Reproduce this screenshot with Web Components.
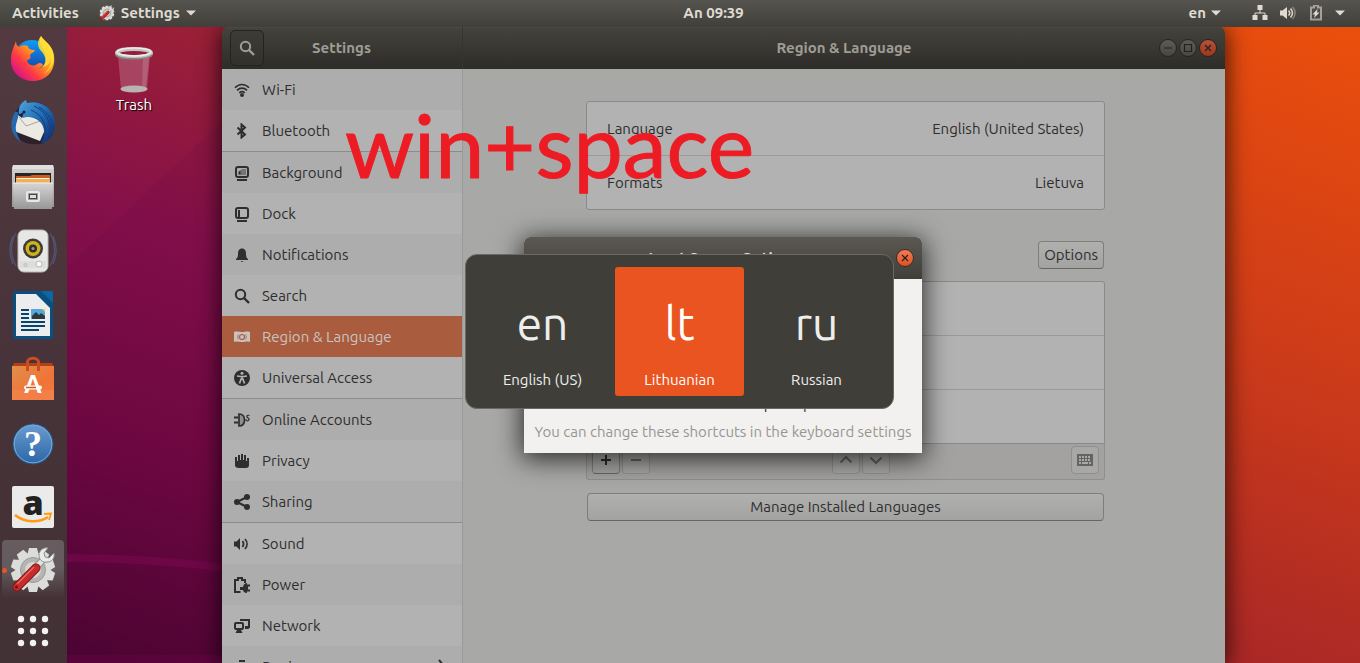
<!DOCTYPE html>
<html lang="en">
<head>
<meta charset="utf-8">
<title>Settings</title>
<style>
  html, body { margin: 0; height: 100%; overflow: hidden; }
  body {
    font: 15px/20px "Ubuntu", "Noto Sans", sans-serif;
    color: #2e2e2e;
  }
</style>
</head>
<body>
<ubuntu-desktop></ubuntu-desktop>

<script>
const BUTTON_RESET = `
  *, *::before, *::after { box-sizing: border-box; }
  button { font: inherit; color: inherit; margin: 0; padding: 0; border: 0; background: none; }
  a { color: inherit; text-decoration: none; }
  svg { display: block; }
`;

/* Registers a custom element whose shadow root holds the given styles and markup. */
function define(tag, css, markup) {
  customElements.define(tag, class extends HTMLElement {
    connectedCallback() {
      if (this.shadowRoot) return;
      const template = document.createElement('template');
      template.innerHTML = `<style>${BUTTON_RESET}${css}</style>` +
        (typeof markup === 'function' ? markup(this) : markup);
      this.attachShadow({ mode: 'open' }).append(template.content.cloneNode(true));
    }
  });
}

/* ---------- symbolic 16px icons ---------- */
const S = 'fill="none" stroke="currentColor"';
const SYMBOLS = {
  search: `<circle cx="6.5" cy="6.5" r="4.7" ${S} stroke-width="2"/><path d="M10 10l5 5" ${S} stroke-width="2.4"/>`,
  wifi: `<path d="M1 5.800C5 1.400 11 1.400 15 5.800M3 8.400c3-3 7-3 10 0M5.200 10.800c1.700-1.500 3.900-1.500 5.600 0" ${S} stroke-width="1.600"/><circle cx="8" cy="13" r="2" fill="currentColor"/>`,
  bluetooth: `<path d="M3.500 4.500l7.500 7-3.500 3V1.500l3.500 3-7.500 7" ${S} stroke-width="2"/>`,
  background: `<rect x="2" y="2" width="12" height="10" rx="2" ${S} stroke-width="2"/><path d="M4.500 9.500V7l2-2v4.500z" fill="currentColor"/><path d="M7.500 4h4.500v6H5" fill="currentColor" opacity=".45"/><rect x="3" y="14" width="10" height="2" fill="currentColor"/>`,
  dock: `<rect x="2" y="2" width="12" height="10" rx="2" ${S} stroke-width="2"/><path d="M4 4h2v7H4z" fill="currentColor"/><rect x="3" y="14" width="10" height="2" fill="currentColor"/>`,
  bell: `<path d="M8 1.500c3 0 4 2.500 4 5 0 3 .5 4.500 2 5.500v1H2v-1c1.500-1 2-2.500 2-5.500 0-2.500 1-5 4-5zM6.500 14h3l-1.500 1z" fill="currentColor"/>`,
  flag: `<path d="M0 3c3-1 5 0 8 0s5-1 8 0v10c-3-1-5 0-8 0s-5-1-8 0z" fill="currentColor"/><circle cx="8" cy="8" r="2.500" fill="none" stroke="#aa5c3e" stroke-width="1.200"/><path d="M4.500 5.500c-1 1.500-1 3.500 0 5M11.500 5.500c1 1.500 1 3.500 0 5" fill="none" stroke="#aa5c3e" stroke-width=".8"/>`,
  access: `<circle cx="8" cy="8" r="8" fill="currentColor"/><circle cx="8" cy="3.300" r="1.500" fill="#b2b2b2"/><path d="M3 6l3.500.5h3L13 6M8 6v4M7.300 8.500L5.500 13.500M8.700 8.500l1.800 5" fill="none" stroke="#b2b2b2" stroke-width="1.700"/>`,
  online: `<path d="M0 5.500h4M0 10.500h4" stroke="currentColor" stroke-width="2"/><path d="M5 2v12c4 0 5.500-3 5.500-6S9 2 5 2z" fill="#909090" stroke="currentColor" stroke-width="1.700"/><path d="M11 8h2M15.500 3.500c-2-.7-3 .3-2.500 1.500s2.500 1 2 2.500-1.500 1.500-2.500 1" ${S} stroke-width="1.200"/>`,
  hand: `<path d="M1 4h2v4h1V2h2v5h1V1h2v6h1V2h2v6h1V5h2v7c0 2-1 3-3 3H5c-3 0-4-1-4-3z" fill="currentColor"/>`,
  share: `<path d="M3 8l10-5M3 8l10 5" ${S} stroke-width="2"/><circle cx="3" cy="8" r="3" fill="currentColor"/><circle cx="13" cy="3" r="3" fill="currentColor"/><circle cx="13" cy="13" r="3" fill="currentColor"/>`,
  sound: `<path d="M0 5.500h2.500L6 2v12l-3.500-3.500H0z" fill="currentColor"/><path d="M8.500 5c1.500 2 1.500 4 0 6M11 3c2.700 3 2.700 7 0 10" ${S} stroke-width="1.700"/>`,
  volume: `<path d="M0 5.500h2.500L7 2v12l-4.500-3.500H0z" fill="currentColor"/><path d="M8.500 5.500c1.500 1.500 1.500 3.500 0 5M10.500 3.500c2.500 2.800 2.500 6.200 0 9" ${S} stroke-width="1.500"/><path d="M12.500 2c3.500 3.500 3.500 8.500 0 12" ${S} stroke-width="1.500" opacity=".4"/>`,
  power: `<path d="M6.500 15H1V3h3V1h4v2h3v3" ${S} stroke-width="2"/><path d="M6 10h3c0-2 2-4 4-4v1.500h3v2h-2v3h2v2h-3V16c-2 0-4-1-4-3H6z" fill="currentColor"/>`,
  network: `<rect x="1" y="5" width="8" height="6" rx="1" ${S} stroke-width="2"/><path d="M3 12h4l1.500 3h-7z" fill="currentColor"/><path d="M6 2h9v7h-3" ${S} stroke-width="2"/><path d="M11 8h3l1 3h-4z" fill="currentColor"/>`,
  devices: `<rect x="5" y="1" width="6" height="2" fill="currentColor"/><rect x="3" y="5" width="10" height="10" rx="2" ${S} stroke-width="2"/>`,
  chevron: `<path d="M5 1l5 6-5 6" ${S} stroke-width="2"/>`,
  wired: `<path d="M8 4v4M3 11V8h10v3" ${S} stroke-width="1"/><path d="M5.500 0h5v5h-5zM.5 10h5v5h-5zM10.500 10h5v5h-5z" fill="currentColor"/>`,
  battery: `<path d="M3 2.500h3v-2h4v2h3v12H3z" ${S} stroke-width="2" opacity=".6"/><path d="M9.500 4L4.500 9.500h2.500L6 13l5.500-5.500H9z" fill="currentColor"/>`,
  caret: `<path d="M3 5.500h10l-5 5z" fill="currentColor"/>`,
  plus: `<path d="M8 3v10M3 8h10" ${S} stroke-width="2"/>`,
  minus: `<path d="M3 8h10" ${S} stroke-width="2"/>`,
  up: `<path d="M2.500 10.500L8 5l5.500 5.500" ${S} stroke-width="2"/>`,
  down: `<path d="M2.500 5.500L8 11l5.500-5.500" ${S} stroke-width="2"/>`,
  keyboard: `<path d="M0 2h16v12H0z" fill="currentColor"/><path d="M2 5h12M2 8h12" stroke="#a8a8a6" stroke-width="2" stroke-dasharray="2 1"/><path d="M2 11h2M5 11h6M12 11h2" stroke="#a8a8a6" stroke-width="2"/>`
};
define('sym-icon', `:host { display: block; width: 16px; height: 16px; flex: none; }`,
  host => `<svg width="16" height="16" viewBox="0 0 16 16" aria-hidden="true">${SYMBOLS[host.getAttribute('name')]}</svg>`);

/* ---------- full-colour application icons ---------- */
const teeth = Array.from({ length: 10 }, (_, i) =>
  `<path d="M20 2h8l2 8H18z" transform="rotate(${i * 36} 24 24)"/>`).join('');
const GEAR = `<g fill="#dcdcda">${teeth}<circle cx="24" cy="24" r="17"/></g>
  <circle cx="24" cy="24" r="12.500" fill="#b4b4b2" stroke="#9b9b99"/><circle cx="24" cy="24" r="8" fill="#d6d6d4"/>
  <path d="M26 22l10-10" stroke="#8d918d" stroke-width="7"/><path d="M26 22l10-10" stroke="#dfe3df" stroke-width="5"/>
  <path d="M45 7l-5 5-4-1-1-4 4-5c-5-1-9 3-9 7 0 5 4 8 8 7 5 0 8-4 7-9z" fill="#e9ece9" stroke="#8d918d"/>
  <path d="M8 41L27 22" stroke="#7e1717" stroke-width="9" stroke-linecap="round"/>
  <path d="M8 41L27 22" stroke="#c92a2a" stroke-width="7" stroke-linecap="round"/>
  <path d="M8 38L25 21" stroke="#e86a66" stroke-width="1.500"/><circle cx="7.500" cy="41" r="1.500" fill="#6d1414"/>`;
const APPS = {
  firefox: `<defs><linearGradient id="f" x1=".85" y1=".1" x2=".1" y2=".85"><stop stop-color="#ffe53b"/><stop offset=".4" stop-color="#ff9a1f"/><stop offset=".7" stop-color="#ff3c44"/><stop offset="1" stop-color="#d6128a"/></linearGradient>
    <linearGradient id="b" x2="0" y2="1"><stop stop-color="#109bf5"/><stop offset="1" stop-color="#17339b"/></linearGradient></defs>
    <circle cx="23" cy="23" r="18" fill="url(#b)"/>
    <path d="M7 6c0 3 1 5 3 6 3-2 7-2 9-1 0 3 3 4 7 4-1 3-5 3-5 6 2 3-2 3-3 5 1 4 7 6 10 3 3-2 5-1 6 1-3 5-11 5-15 1 6 6 20 3 18-9 0-7-9-12-5-21 3 5 12 9 13 20C47 36 37 46 24 46 11 46 1 36 2 24c0-7 3-12 5-18z" fill="url(#f)"/>
    <path d="M32 1c-5 6-3 12 1 16 5 6 4 12 0 15 6-1 9-5 9-9 1 7-3 13-8 16 8-3 13-13 10-22C41 8 34 6 32 1z" fill="#ffdf35" opacity=".85"/>`,
  thunderbird: `<defs><linearGradient id="t" x2="1" y2="1"><stop stop-color="#4ea5dd"/><stop offset=".5" stop-color="#1f69b0"/><stop offset="1" stop-color="#12235f"/></linearGradient></defs>
    <circle cx="24" cy="24" r="21" fill="#1b2857"/><path d="M5 36c8 9 20 11 31 8l-14-11z" fill="#2c2029"/>
    <path d="M9 16l22-3 7 13-7 16L5 32z" fill="#ece9e2"/><path d="M10 18l7 9 17-6" fill="none" stroke="#aaa69d"/>
    <path d="M10 15C9 7 13 3 17 1l1 3c14-4 29 7 28 21 0 9-4 17-14 20 5-8 4-18-2-23-5-4-12-5-16-3z" fill="url(#t)"/>
    <path d="M25 7c11 5 17 14 16 27M30 8c10 6 14 14 13 23M22 11c10 4 16 13 15 29" fill="none" stroke="#143d83" stroke-width="1"/>
    <path d="M6 13c-6 10-5 23 6 30-4-7-6-12-5-17s3-8 2-13z" fill="#2568ac"/><circle cx="15" cy="13" r="1.500" fill="#151f44"/><path d="M9 16l6-3-2 6z" fill="#1c2243"/>`,
  files: `<defs><linearGradient id="g" x2="0" y2="1"><stop stop-color="#d5d5d5"/><stop offset="1" stop-color="#979797"/></linearGradient></defs>
    <path d="M4 2h40l1 5v37H3V7z" fill="url(#g)"/><path d="M4 2h40l1 4H3z" fill="#e0e0e0"/><path d="M6 10h36v13H6z" fill="#292423"/>
    <path d="M7 13h14l2-1h18v11H7z" fill="#c65f22"/><path d="M7 15h34v8H7z" fill="#f3ad5b"/><path d="M8 15.500h32" stroke="#fff4df"/><path d="M4 20h40l-1 26H5z" fill="url(#g)"/><path d="M4 20h40" stroke="#f0f0f0"/>
    <rect x="18" y="29" width="12" height="9" rx="1.500" fill="#9b9b9b" stroke="#e7e7e7" stroke-width="2"/><rect x="20.500" y="31.500" width="7" height="4" fill="#ddd" stroke="#444"/>`,
  rhythmbox: `<g fill="none" stroke="#53648e" stroke-width="1.200" opacity=".7"><path d="M7 6c-6 10-6 23 0 33M4 9c-4 9-4 19 0 28M41 6c6 10 6 23 0 33M44 9c4 9 4 19 0 28"/></g>
    <rect x="9" y="3" width="30" height="42" rx="6" fill="#e7e8e5" stroke="#b9bab7"/><path d="M11 34h26v7H11z" fill="#dddedb"/>
    <circle cx="24" cy="21.500" r="10" fill="#393b3b"/><circle cx="24" cy="21.500" r="7.500" fill="#d1b119"/><circle cx="24" cy="21.500" r="4" fill="#2f302c"/><circle cx="24" cy="21.500" r="1.500" fill="#999"/>
    <circle cx="30" cy="37" r="3" fill="#f8f8f7" stroke="#bbb"/><circle cx="16.500" cy="38" r="1.500" fill="none" stroke="#bbb"/>`,
  writer: `<path d="M6 0h26l12 12v34a2 2 0 0 1-2 2H6a2 2 0 0 1-2-2V2a2 2 0 0 1 2-2z" fill="#08507f"/><path d="M32 0h10a2 2 0 0 1 2 2v10z" fill="#0a69a5"/>
    <path d="M7 3h20l14 14v28H7z" fill="#ededed"/><path d="M12 19h8M12 23h8M12 27h8M12 31h24M12 35h24M12 39h18" stroke="#08456d" stroke-width="2"/>
    <path d="M22 18h14v10H22z" fill="#58a7dc"/><path d="M23 28v-3l4-4 3 3 2-2 4 3v3z" fill="#2d393d"/><path d="M33 18h3v3z" fill="#edd62b"/>`,
  software: `<defs><linearGradient id="s" x2="1" y2="1"><stop stop-color="#e08f4c"/><stop offset=".6" stop-color="#f07436"/><stop offset="1" stop-color="#f0793e"/></linearGradient></defs>
    <path d="M5 8h38l2 4H3z" fill="#b33f16"/><path d="M3 11h42v34H3z" fill="url(#s)"/><path d="M3 35h42v10H3z" fill="#f58855" opacity=".5"/>
    <path d="M18.500 16V7c0-5 11-5 11 0v9" fill="none" stroke="#c94d1d" stroke-width="3"/>
    <text x="24" y="38" font-family="Lato, sans-serif" font-weight="900" font-size="24" text-anchor="middle" fill="#fff">A</text><rect x="15" y="30.500" width="18" height="4" rx="2" fill="#fff"/><path d="M17 32.500h10" stroke="#d9531e" stroke-width="1.500"/>`,
  help: `<defs><linearGradient id="h" x2="0" y2="1"><stop stop-color="#6a9cd0"/><stop offset="1" stop-color="#2c66a6"/></linearGradient></defs>
    <circle cx="24" cy="25" r="20" fill="url(#h)" stroke="#245486"/><circle cx="24" cy="25" r="18.800" fill="none" stroke="#79a9d8"/>
    <text x="24" y="37" font-family="Liberation Serif, serif" font-weight="700" font-size="36" text-anchor="middle" fill="#fff">?</text>`,
  amazon: `<rect x="3" y="3" width="42" height="42" rx="2" fill="#ebebeb"/><text x="24" y="32" font-family="Open Sans, sans-serif" font-weight="800" font-size="34" text-anchor="middle" fill="#222">a</text>
    <path d="M6 32c10 8 24 8 33 2" fill="none" stroke="#ff9a12" stroke-width="2.600"/><path d="M35 31l7-.5-2 6.500" fill="none" stroke="#ff9a12" stroke-width="1.800"/>`,
  settings: GEAR,
  grid: [12, 24, 36].flatMap(y => [12, 24, 36].map(x => `<circle cx="${x}" cy="${y}" r="3.200" fill="#f2f2f0"/>`)).join(''),
  trash: `<path d="M8 10h32l-3 33c-5 3-21 3-26 0z" fill="#c98aa0" opacity=".38"/><path d="M33 12h6l-3 30h-4z" fill="#fff" opacity=".14"/>
    <ellipse cx="24" cy="43" rx="13.500" ry="3.500" fill="#b9b4b4"/><ellipse cx="24" cy="7" rx="17" ry="4" fill="none" stroke="#c4c4c2" stroke-width="4"/><ellipse cx="24" cy="6" rx="17" ry="4" fill="none" stroke="#ecece9" stroke-width="1.500"/><path d="M6 9c3 5 33 5 36 0" fill="none" stroke="#858583" stroke-width="1.500"/>`
};
define('app-icon', `:host { display: block; width: var(--size, 48px); height: var(--size, 48px); } svg { width: 100%; height: 100%; overflow: visible; }`,
  host => `<svg viewBox="0 0 48 48" aria-hidden="true">${APPS[host.getAttribute('name')]}</svg>`);

/* ---------- round window buttons ---------- */
const WIN_GLYPHS = { minimise: 'M5 9h8', maximise: 'M5.500 5.500h7v7h-7z', close: 'M6 6l6 6M12 6l-6 6' };
define('window-button', `
  :host { display: block; }
  button { display: block; width: 18px; height: 18px; border-radius: 50%; background: linear-gradient(#5c5b56, #484742); border: 1px solid #262521; color: #22211e; }
  :host([kind="close"]) button { background: linear-gradient(#b75138, #a0371a); }
  :host([bright]) button { background: linear-gradient(#f57a53, #e05022); border-color: #33322e; }
  svg { margin: -1px; }`,
  host => `<button aria-label="${host.getAttribute('kind')}"><svg width="18" height="18" viewBox="0 0 18 18"><path d="${WIN_GLYPHS[host.getAttribute('kind')]}" ${S} stroke-width="1.200"/></svg></button>`);

/* ---------- top bar ---------- */
define('top-bar', `
  :host { display: grid; box-sizing: border-box; grid-template-columns: 10fr auto 9fr; align-items: center; height: 27px; flex: none; padding: 0 12px 1px; background: linear-gradient(#56544e, #403f3a); color: #dfdbd2; font-weight: 600; }
  div, button { display: flex; align-items: center; }
  .apps { gap: 20px; }
  .apps button { gap: 6px; }
  .lang { gap: 2px; }
  .apps sym-icon { margin-left: -3px; }
  .tray { justify-content: flex-end; gap: 28px; }
  .system { gap: 12px; }
  .system sym-icon:last-child { margin-left: -4px; }
  app-icon { --size: 16px; }`,
  `<div class="apps"><button>Activities</button>
     <button><app-icon name="settings"></app-icon>Settings<sym-icon name="caret"></sym-icon></button></div>
   <button>An 09:39</button>
   <div class="tray"><button class="lang">en<sym-icon name="caret"></sym-icon></button>
     <button class="system" aria-label="System menu"><sym-icon name="wired"></sym-icon><sym-icon name="volume"></sym-icon><sym-icon name="battery"></sym-icon><sym-icon name="caret"></sym-icon></button></div>`);

/* ---------- dock ---------- */
define('dock-item', `
  :host { display: block; box-sizing: border-box; height: 64px; padding: 1px 3px 5px 2px; }
  :host([launcher]) { height: 56px; padding-bottom: 2px; }
  button { display: grid; place-items: center; position: relative; width: 100%; height: 100%; padding-top: 4px; border-radius: 4px; }
  :host([launcher]) button { padding: 0; }
  :host([active]) button { padding-top: 2px; background: linear-gradient(#675d61, #635a5d 50%, #63585d00); }
  :host([active]) button::before { content: ""; position: absolute; left: 0; top: 28px; width: 5px; height: 5px; border-radius: 50%; background: #e95420; }`,
  host => `<button aria-label="${host.getAttribute('app')}"><app-icon name="${host.getAttribute('app')}"></app-icon></button>`);
define('side-dock', `
  :host { display: block; width: 67px; flex: none; background: linear-gradient(#523a40, #48343a 45%, #423135); }`,
  ['firefox', 'thunderbird', 'files', 'rhythmbox', 'writer', 'software', 'help', 'amazon'].map(a => `<dock-item app="${a}"></dock-item>`).join('') +
  `<dock-item app="settings" active></dock-item><dock-item app="grid" launcher></dock-item>`);

/* ---------- settings sidebar ---------- */
define('nav-row', `
  :host { display: block; background: #b2b2b2; }
  :host([shade]) { background: #adadad; }
  :host([divided]) { border-bottom: 1px solid #8c8c8b; }
  :host([current]) { background: #aa5c3e; color: #c9c3bf; }
  a { display: flex; align-items: center; gap: 12px; height: 41px; padding: 0 12px; }
  span { flex: 1; }`,
  host => `<a href="#${host.getAttribute('icon')}"><sym-icon name="${host.getAttribute('icon')}"></sym-icon><span><slot></slot></span>${host.hasAttribute('more') ? '<sym-icon name="chevron"></sym-icon>' : ''}</a>`);
define('settings-nav', `:host { display: block; box-sizing: border-box; width: 241px; flex: none; border-right: 1px solid #999998; background: #b2b2b2; overflow: hidden; }`,
  `<nav aria-label="Settings">
  <nav-row icon="wifi" shade>Wi-Fi</nav-row>
  <nav-row icon="bluetooth" divided>Bluetooth</nav-row>
  <nav-row icon="background" shade>Background</nav-row>
  <nav-row icon="dock">Dock</nav-row>
  <nav-row icon="bell" shade>Notifications</nav-row>
  <nav-row icon="search">Search</nav-row>
  <nav-row icon="flag" current>Region &amp; Language</nav-row>
  <nav-row icon="access" divided>Universal Access</nav-row>
  <nav-row icon="online" shade>Online Accounts</nav-row>
  <nav-row icon="hand">Privacy</nav-row>
  <nav-row icon="share" shade divided>Sharing</nav-row>
  <nav-row icon="sound">Sound</nav-row>
  <nav-row icon="power" shade>Power</nav-row>
  <nav-row icon="network">Network</nav-row>
  <nav-row icon="devices" shade more>Devices</nav-row></nav>`);

/* ---------- settings content ---------- */
define('push-button', `
  :host { display: block; }
  button { display: grid; place-items: center; width: 100%; height: 28px; padding: 0 5px; border: 1px solid #7e7e7c; border-bottom-color: #666664; border-radius: 4px; background: linear-gradient(#b0b0af, #a3a3a1); }
  :host([square]) { width: 28px; }
  :host([square]) button { padding: 0; }
  button:disabled { color: #646462; border-color: #8f8f8d; background: #a8a8a6; }`,
  host => `<button ${host.hasAttribute('off') ? 'disabled' : ''} aria-label="${host.getAttribute('label') || host.textContent}"><slot></slot></button>`);
define('region-panel', `
  :host { display: block; box-sizing: border-box; flex: 1; min-width: 0; padding: 32px 120px 0 123px; background: #a8a8a6; }
  .list { border: 1px solid #8a8a88; border-radius: 3px; background: #b2b2b2; }
  .row { display: flex; justify-content: space-between; align-items: center; width: 100%; height: 53px; padding: 0 20px; }
  .row + .row { height: 54px; border-top: 1px solid #999998; }
  .list.sources { border-radius: 3px 3px 0 0; }
  .heading { display: flex; justify-content: flex-end; padding: 31px 1px 12px; }
  .tools { display: flex; justify-content: space-between; padding: 2px 5px 5px; border: 1px solid #8f8f8d; border-top: 0; background: #a3a2a0; border-radius: 0 0 3px 3px; }
  .tools div { display: flex; gap: 2px; }
  .manage { padding: 13px 1px; }`,
  `<div class="list"><button class="row"><span>Language</span><span>English (United States)</span></button><button class="row"><span>Formats</span><span>Lietuva</span></button></div>
   <div class="heading"><push-button>Options</push-button></div>
   <div class="list sources"><div class="row"></div><div class="row"></div><div class="row"></div></div>
   <div class="tools">
     <div><push-button square label="Add"><sym-icon name="plus"></sym-icon></push-button><push-button square off label="Remove"><sym-icon name="minus"></sym-icon></push-button></div>
     <div><push-button square off label="Move up"><sym-icon name="up"></sym-icon></push-button><push-button square off label="Move down"><sym-icon name="down"></sym-icon></push-button></div>
     <push-button square off label="Show layout"><sym-icon name="keyboard"></sym-icon></push-button></div>
   <div class="manage"><push-button>Manage Installed Languages</push-button></div>`);
define('settings-window', `
  :host { display: flex; flex-direction: column; border-radius: 6px 6px 0 0; overflow: hidden; box-shadow: 0 3px 22px 2px rgba(0,0,0,.7); }
  header { display: flex; height: 42px; flex: none; background: linear-gradient(#44433d, #2d2c28); box-shadow: inset 0 1px #4a4943; color: #a09d96; font-weight: 600; }
  .left { display: grid; grid-template-columns: 34px 1fr 34px; align-items: center; width: 241px; padding: 0 9px 0 8px; text-align: center; border-right: 1px solid #35342f; }
  .left button { display: grid; place-items: center; height: 36px; border: 1px solid #24231f; border-radius: 5px; background: linear-gradient(#3d3c37, #32312d); }
  .right { flex: 1; display: grid; grid-template-columns: 58px 1fr 58px; align-items: center; padding: 0 8px; text-align: center; }
  .controls { grid-column: 3; display: flex; gap: 2px; }
  .right span { grid-column: 2; }
  .body { flex: 1; min-height: 0; display: flex; }`,
  `<header><div class="left"><button aria-label="Search settings"><sym-icon name="search"></sym-icon></button><span>Settings</span></div>
     <div class="right"><span>Region &amp; Language</span><div class="controls"><window-button kind="minimise"></window-button><window-button kind="maximise"></window-button><window-button kind="close"></window-button></div></div></header>
   <div class="body"><settings-nav></settings-nav><region-panel></region-panel></div>`);

/* ---------- input source dialog ---------- */
define('options-dialog', `
  :host { display: flex; flex-direction: column; border-radius: 6px 6px 0 0; box-shadow: 0 4px 26px 2px rgba(0,0,0,.75); background: #f2f1f0; }
  header { display: grid; grid-template-columns: 18px 1fr 18px; align-items: center; height: 42px; padding: 0 8px; background: linear-gradient(#5b5951, #403f3a); border-radius: 6px 6px 0 0; color: #dfdbd2; font-weight: 600; text-align: center; }
  header span { grid-column: 2; }
  section { flex: 1; display: flex; flex-direction: column; justify-content: flex-end; padding: 0 10px 11px; text-align: center; }
  p { margin: 0; }
  .key { padding-left: 136px; margin-bottom: 8px; }
  .hint { color: #979591; white-space: nowrap; }`,
  `<header><span>Input Source Options</span><window-button kind="close" bright></window-button></header>
   <section><p class="key">Super+Space</p><p class="hint">You can change these shortcuts in the keyboard settings</p></section>`);

/* ---------- keyboard layout switcher ---------- */
define('layout-choice', `
  :host { display: block; }
  button { display: flex; flex-direction: column; align-items: center; justify-content: flex-end; gap: 20px; width: 129px; height: 129px; padding-bottom: 6px; border-radius: 3px; color: #eeeeec; }
  :host([selected]) button { background: #e95420; color: #fff; }
  b { font-weight: 400; font-size: 46px; line-height: 54px; }`,
  host => `<button><b>${host.getAttribute('code')}</b><span><slot></slot></span></button>`);
define('layout-switcher', `
  :host { display: flex; box-sizing: border-box; gap: 8px; padding: 12px; border: 1px solid #6a6963; border-radius: 12px; background: #3f3e39; }`,
  `<layout-choice code="en">English (US)</layout-choice><layout-choice code="lt" selected>Lithuanian</layout-choice><layout-choice code="ru">Russian</layout-choice>`);

/* ---------- whole desktop ---------- */
define('desktop-wallpaper', `
  :host { display: block; background: linear-gradient(200deg, #eb4f0c, #cb3a1a 50%, #aa2826 90%, #a52528) right / 300px 100% no-repeat, linear-gradient(200deg, #a8262c, #9b2036 20%, #85104a 45%, #700842 72%, #4d0533 98%) left / 600px 100% no-repeat; }
  svg { width: 100%; height: 100%; }`,
  `<svg aria-hidden="true"><path d="M0 531q80 0 160 10" fill="none" stroke="#78084b" stroke-width="8" opacity=".7"/><path d="M0 628h160v9H0z" fill="#78084b" opacity=".3"/><path d="M0 240L160 90V640H0z" fill="#50003a" opacity=".08"/></svg>`);
define('ubuntu-desktop', `
  :host { display: flex; flex-direction: column; height: 100vh; position: relative; overflow: hidden; }
  .row { flex: 1; min-height: 0; display: flex; }
  main { flex: 1; position: relative; overflow: hidden; }
  desktop-wallpaper { position: absolute; inset: 0; }
  .trash { position: absolute; left: 33px; top: 19px; width: 68px; display: grid; gap: 1px; justify-items: center; color: #fff; text-shadow: 1px 1px 1px #000; }
  settings-window { position: absolute; left: 155px; right: 135px; top: 0; bottom: 0; }
  options-dialog { position: absolute; left: 457px; right: 438px; top: 210px; height: 216px; }
  .overlay { position: absolute; inset: 0 1px 0 0; display: grid; place-items: center; pointer-events: none; }
  .note { position: absolute; left: 345px; top: 94px; margin: 0; font: 88px/100px "Lato", sans-serif; color: #ed1c24; -webkit-text-stroke: 1px #ed1c24; }`,
  `<top-bar></top-bar>
   <div class="row"><side-dock></side-dock>
     <main><desktop-wallpaper></desktop-wallpaper>
       <button class="trash"><app-icon name="trash"></app-icon>Trash</button>
       <settings-window></settings-window><options-dialog></options-dialog></main></div>
   <div class="overlay"><layout-switcher></layout-switcher></div>
   <p class="note">win+space</p>`);
</script>
</body>
</html>
